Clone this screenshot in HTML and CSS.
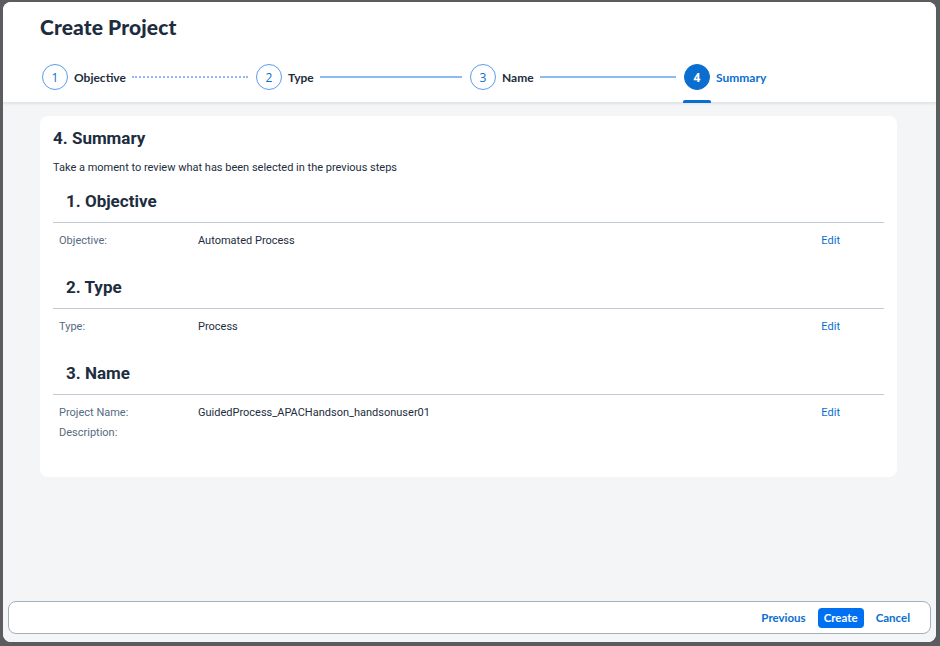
FILE: index.html
```html
<!DOCTYPE html>
<html lang="en">
<head>
<meta charset="utf-8">
<title>Create Project</title>
<link rel="stylesheet" href="styles.css">
</head>
<body>
<div class="dialog">
  <header class="dlg-header">
    <h1 class="dlg-title">Create Project</h1>
    <div class="steps">
      <div class="step done">
        <span class="circle">1</span>
        <span class="step-label">Objective</span>
        <span class="connector dotted"></span>
      </div>
      <div class="step done">
        <span class="circle">2</span>
        <span class="step-label">Type</span>
        <span class="connector"></span>
      </div>
      <div class="step done">
        <span class="circle">3</span>
        <span class="step-label">Name</span>
        <span class="connector"></span>
      </div>
      <div class="step active">
        <span class="circle">4</span>
        <span class="step-label">Summary</span>
      </div>
    </div>
  </header>
  <main class="dlg-body">
    <section class="card">
      <h2 class="card-title">4. Summary</h2>
      <p class="card-desc">Take a moment to review what has been selected in the previous steps</p>

      <h3 class="sec-title">1. Objective</h3>
      <div class="sec-rule"></div>
      <div class="row">
        <span class="lbl">Objective:</span>
        <span class="val">Automated Process</span>
        <a class="edit">Edit</a>
      </div>

      <h3 class="sec-title">2. Type</h3>
      <div class="sec-rule"></div>
      <div class="row">
        <span class="lbl">Type:</span>
        <span class="val">Process</span>
        <a class="edit">Edit</a>
      </div>

      <h3 class="sec-title">3. Name</h3>
      <div class="sec-rule"></div>
      <div class="row">
        <span class="lbl">Project Name:</span>
        <span class="val">GuidedProcess_APACHandson_handsonuser01</span>
        <a class="edit">Edit</a>
      </div>
      <div class="row">
        <span class="lbl">Description:</span>
        <span class="val"></span>
      </div>
    </section>
    <footer class="dlg-footer">
      <button class="btn ghost">Previous</button>
      <button class="btn primary">Create</button>
      <button class="btn ghost">Cancel</button>
    </footer>
  </main>
</div>
</body>
</html>
```

FILE: styles.css
```css
* { box-sizing: border-box; }
html, body { margin: 0; padding: 0; }
body {
  background: #5a5c5f;
  font-family: "Roboto", "Open Sans", Arial, sans-serif;
  color: #1d2d3e;
  width: 940px;
  height: 646px;
  overflow: hidden;
}
.dialog {
  margin: 2px 0 0 3px;
  width: 933px;
  height: 640px;
  background: #fff;
  border-radius: 8px;
  overflow: hidden;
  display: flex;
  flex-direction: column;
}
.dlg-header {
  height: 101px;
  flex: none;
  padding: 12px 0 0 37px;
  background: #fff;
  border-bottom: 1px solid #e3e6e9;
  box-shadow: 0 1px 2px rgba(0,0,0,0.08);
  position: relative;
  z-index: 1;
  display: flex;
  flex-direction: column;
}
.dlg-title {
  margin: 0;
  font-family: "Lato", "Open Sans", sans-serif;
  font-weight: 900;
  font-size: 21px;
  line-height: 26px;
  color: #1d2d3e;
  letter-spacing: 0.1px;
}
.steps {
  display: flex;
  align-items: center;
  margin-top: 24px;
  padding-left: 2px;
}
.step {
  display: flex;
  align-items: center;
  width: 214px;
  position: relative;
}
.step.active { width: auto; }
.circle {
  width: 26px;
  height: 26px;
  border-radius: 50%;
  border: 1px solid #5b9ced;
  color: #0a6ed1;
  font-size: 12px;
  display: flex;
  align-items: center;
  justify-content: center;
  flex: none;
  font-family: "Open Sans", sans-serif;
}
.step-label {
  margin-left: 6px;
  font-family: "Lato", sans-serif;
  font-weight: 700;
  font-size: 12px;
  color: #1d2d3e;
  white-space: nowrap;
}
.connector {
  flex: 1;
  height: 0;
  border-top: 2px solid #8dbaf0;
  margin: 0 8px 0 6px;
}
.connector.dotted {
  border-top: 2px dotted #8dbaf0;
}
.step.active .circle {
  background: #0a6ed1;
  border-color: #0a6ed1;
  color: #fff;
  font-weight: 700;
}
.step.active .step-label { color: #0a6ed1; }
.step.active .circle::after {
  content: "";
  position: absolute;
  left: -1px;
  top: 36px;
  width: 28px;
  height: 3px;
  background: #0a6ed1;
  border-radius: 2px 2px 0 0;
}
.dlg-body {
  flex: 1;
  background: #f4f5f6;
  display: flex;
  flex-direction: column;
  padding: 13px 5px 8px 5px;
}
.card {
  margin: 0 34px 0 32px;
  background: #fff;
  border-radius: 8px;
  padding: 11px 13px 35px 13px;
  height: 361px;
}
.card-title {
  margin: 0;
  font-size: 17px;
  line-height: 22px;
  font-weight: 700;
  font-family: "Roboto", "Open Sans", sans-serif;
}
.card-desc {
  margin: 11px 0 14px 0;
  font-size: 11px;
  line-height: 16px;
  color: #1d2d3e;
}
.sec-title {
  margin: 0 0 10px 13px;
  font-size: 17px;
  line-height: 22px;
  font-weight: 700;
  font-family: "Roboto", "Open Sans", sans-serif;
}
.sec-rule {
  height: 1px;
  background: #c2cbd4;
  margin-bottom: 7px;
}
.row {
  display: flex;
  align-items: center;
  height: 20px;
  padding-left: 6px;
  padding-right: 44px;
  font-size: 11px;
}
.row + .sec-title { margin-top: 26px; }
.lbl {
  width: 139px;
  flex: none;
  color: #556b82;
}
.val {
  flex: 1;
  color: #1d2d3e;
}
.edit {
  color: #0a6ed1;
  cursor: pointer;
}
.dlg-footer {
  margin-top: auto;
  height: 33px;
  background: #fff;
  border: 1px solid #a3afbb;
  border-radius: 8px;
  display: flex;
  align-items: center;
  justify-content: flex-end;
  padding-right: 14px;
  gap: 6px;
}
.btn {
  font-family: "Lato", "Open Sans", sans-serif;
  font-weight: 700;
  font-size: 11.5px;
  height: 20px;
  border: none;
  border-radius: 4px;
  padding: 0 6px;
  background: transparent;
  color: #0a6ed1;
  cursor: pointer;
}
.btn.primary {
  background: #0070f2;
  color: #fff;
  padding: 0 6px;
}
```
